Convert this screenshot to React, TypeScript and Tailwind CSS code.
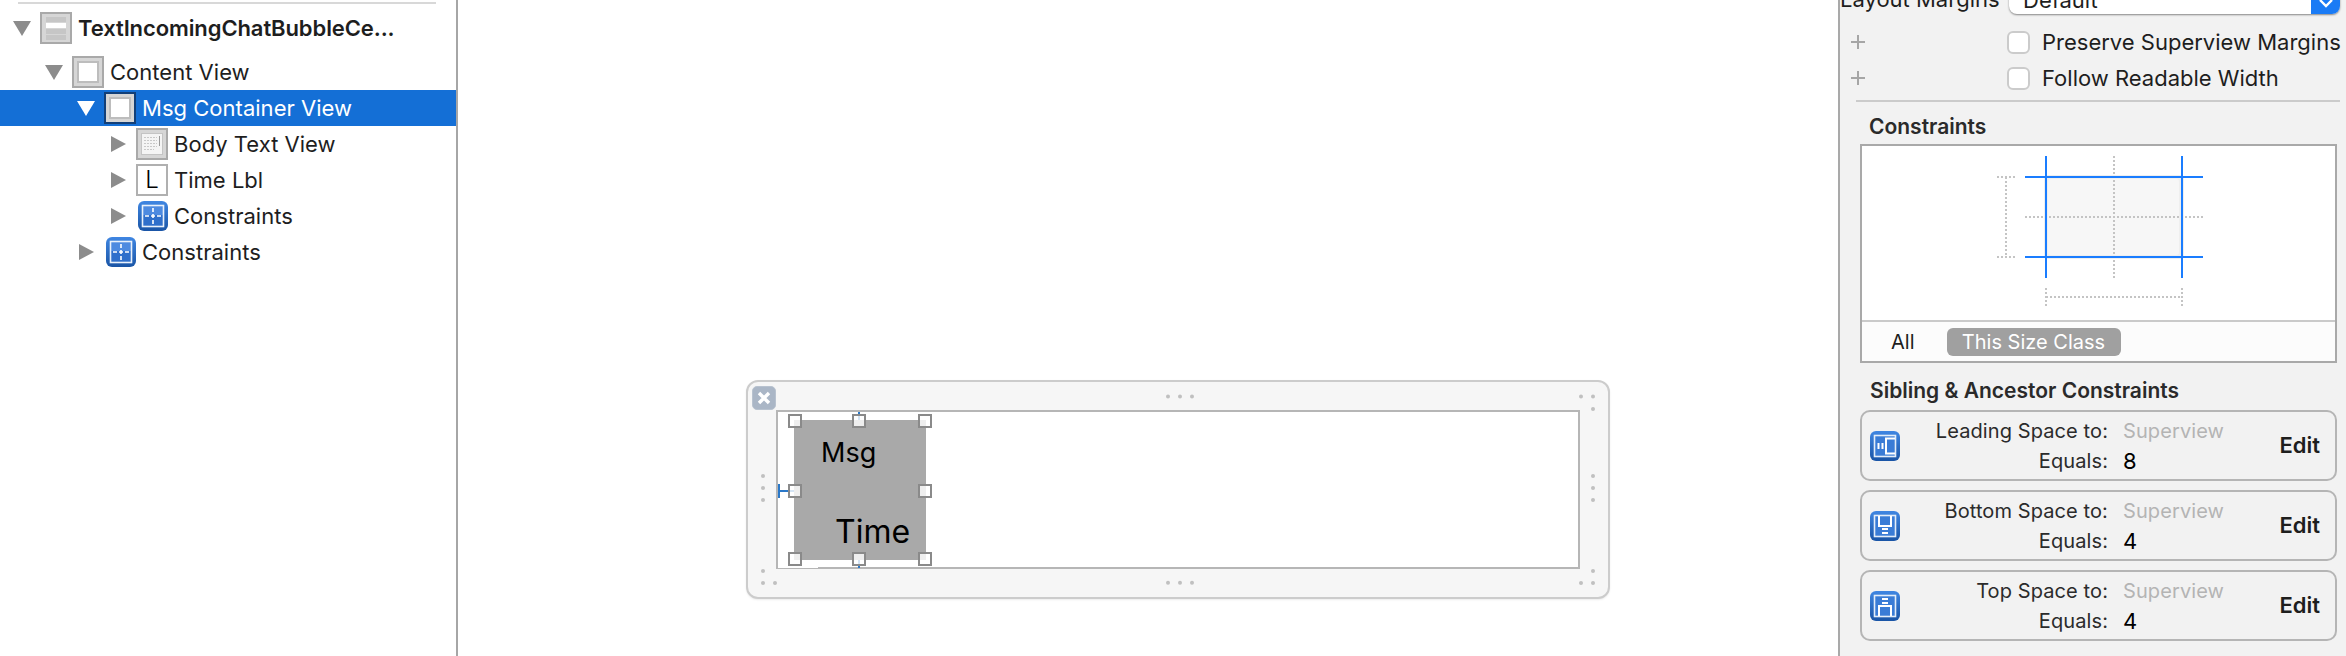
import React from "react";

const font = { fontFamily: '"Inter", "Liberation Sans", sans-serif' };

function Tri({ down, color = "#8c8c8c" }: { down?: boolean; color?: string }) {
  return (
    <svg width="18" height="18" viewBox="0 0 18 18" className="shrink-0">
      {down ? <polygon points="0,2 18,2 9,17" fill={color} /> : <polygon points="1,1 16,9 1,17" fill={color} />}
    </svg>
  );
}

function ViewIcon({ selected }: { selected?: boolean }) {
  return (
    <div className={`w-8 h-8 shrink-0 border-2 ${selected ? "border-[#123f78]" : "border-[#a9a9a9]"} bg-[#d6d6d6] flex items-center justify-center`}>
      <div className="w-[22px] h-[22px] bg-white border-2 border-[#bdbdbd]" />
    </div>
  );
}

function CellIcon() {
  return (
    <div className="w-8 h-8 shrink-0 border-2 border-[#a9a9a9] bg-[#d6d6d6] flex flex-col justify-center gap-[1px] px-[4px]">
      <div className="h-[5px] bg-[#c6c6c6]" />
      <div className="h-[5px] bg-white" />
      <div className="h-[5px] bg-[#c6c6c6]" />
      <div className="h-[5px] bg-[#c6c6c6]" />
    </div>
  );
}

function TextViewIcon() {
  return (
    <div className="w-8 h-8 shrink-0 border-2 border-[#a9a9a9] bg-[#d6d6d6] flex items-center justify-center">
      <svg width="22" height="22" viewBox="0 0 22 22">
        <rect width="22" height="22" fill="#f4f4f4" />
        <rect x="0.5" y="0.5" width="21" height="21" fill="none" stroke="#c4c4c4" />
        <g stroke="#c8c8c8" strokeDasharray="2 1">
          <path d="M3 4.5h13M3 7.5h13M3 10.5h13M3 13.5h13M3 16.5h10" />
        </g>
        <path d="M18.5 3v10" stroke="#9a9a9a" />
      </svg>
    </div>
  );
}

function LabelIcon() {
  return (
    <div className="w-8 h-8 shrink-0 border-2 border-[#b0b0b0] bg-white flex items-center justify-center text-[24px] leading-none font-light text-black">
      L
    </div>
  );
}

function BlueIcon({ kind, id }: { kind: "cross" | "leading" | "bottom" | "top"; id: string }) {
  return (
    <svg width="30" height="30" viewBox="0 0 30 30" className="shrink-0">
      <defs>
        <linearGradient id={id} x1="0" y1="0" x2="0" y2="1">
          <stop offset="0" stopColor="#3f86e2" />
          <stop offset="1" stopColor="#1a55a6" />
        </linearGradient>
      </defs>
      <rect width="30" height="30" rx="6" fill={`url(#${id})`} />
      {kind === "cross" ? (
        <>
          <rect x="5" y="5" width="20" height="20" fill="#2f6fcb" />
          <rect x="5" y="5" width="20" height="9" fill="#4d8ae0" />
          <rect x="4.5" y="4.5" width="21" height="21" fill="none" stroke="#e9f1fb" strokeWidth="1.6" />
          <path d="M15 7v4M15 13v4M15 19v4M7 15h4M13 15h4M19 15h4" stroke="#fff" strokeWidth="1.6" />
        </>
      ) : (
        <>
          <rect x="5" y="5" width="20" height="20" fill="#3a7cd6" />
          <rect x="4.5" y="4.5" width="21" height="21" fill="none" stroke="#e3edf9" strokeWidth="1.6" />
          {kind === "leading" && <path d="M8.5 12v6M12.5 12v6M25 7.5h-9v15h9" fill="none" stroke="#fff" strokeWidth="2" />}
          {kind === "bottom" && <path d="M9 5v10h12V5M12 18h6M12 22h6" fill="none" stroke="#fff" strokeWidth="2" />}
          {kind === "top" && <path d="M9 25V15h12v10M12 8h6M12 12h6" fill="none" stroke="#fff" strokeWidth="2" />}
        </>
      )}
    </svg>
  );
}

const rows = [
  { pl: "pl-[13px]", down: true, icon: <CellIcon />, text: "TextIncomingChatBubbleCe...", bold: true, h: "h-[36px] mb-[8px]" },
  { pl: "pl-[45px]", down: true, icon: <ViewIcon />, text: "Content View" },
  { pl: "pl-[77px]", down: true, icon: <ViewIcon selected />, text: "Msg Container View", selected: true },
  { pl: "pl-[110px]", icon: <TextViewIcon />, text: "Body Text View" },
  { pl: "pl-[110px]", icon: <LabelIcon />, text: "Time Lbl" },
  { pl: "pl-[110px]", icon: <BlueIcon kind="cross" id="c1" />, text: "Constraints", blue: true },
  { pl: "pl-[78px]", icon: <BlueIcon kind="cross" id="c2" />, text: "Constraints", blue: true },
];

function Tree() {
  return (
    <aside className="w-[458px] h-full shrink-0 border-r-2 border-[#a6a6a6] bg-white">
      <div className="h-[2px] mt-[2px] mb-[6px] ml-[18px] mr-[20px] bg-[#d8d8d8]" />
      {rows.map((r, i) => (
        <div
          key={i}
          className={`flex items-center ${r.h ?? "h-[36px]"} ${r.pl} ${r.selected ? "bg-[#146fd6] text-white" : "text-[#1e1e1e]"}`}
        >
          <Tri down={r.down} color={r.selected ? "#ffffff" : "#8c8c8c"} />
          <div className={r.down ? "ml-[9px]" : r.blue ? "ml-[10px]" : "ml-[8px]"}>{r.icon}</div>
          <span className={`ml-[6px] text-[22px] leading-none whitespace-nowrap ${r.bold ? "font-semibold tracking-[-0.1px]" : "tracking-[0.02px]"}`}>{r.text}</span>
        </div>
      ))}
    </aside>
  );
}

const dots = [
  [1168, 396.6], [1180, 396.6], [1192, 396.6], [1168, 582.7], [1180, 582.7], [1192, 582.7],
  [1581, 396.6], [1593, 396.6], [1593, 409], [1593, 476], [1593, 488], [1593, 500], [1593, 571], [1581, 583], [1593, 583],
  [763, 476], [763, 488], [763, 500], [763, 571], [763, 583], [775, 583],
];

function Handle({ className }: { className: string }) {
  return <div className={`absolute w-[14px] h-[14px] border-2 border-[#8a8a8a] bg-white/80 ${className}`} />;
}

function Widget() {
  return (
    <div className="relative ml-[288px] mt-[380px] w-[864px] h-[219px] rounded-[12px] border-2 border-[#cccccc] bg-[#f6f6f6] shadow-[0_1px_2px_rgba(0,0,0,0.08)] pl-[28px] pt-[28px]">
      <svg className="absolute left-[-2px] top-[-2px]" width="864" height="219" viewBox="746 380 864 219">
        {dots.map(([x, y], i) => (
          <circle key={i} cx={x} cy={y} r="2" fill="#c0c0c0" />
        ))}
      </svg>
      <div className="absolute left-[4px] top-[4px] w-[24px] h-[24px] rounded-[5px] bg-[#aab6c6] border border-[#b8c2cf] flex items-center justify-center">
        <svg width="16" height="16" viewBox="0 0 16 16">
          <path d="M3 3l10 10M13 3L3 13" stroke="#fff" strokeWidth="3.4" />
        </svg>
      </div>
      <div className="relative w-[804px] h-[159px] border-2 border-[#b6b6b6] bg-white pl-[16px] pt-[8px]">
        <div className="absolute left-0 bottom-[-1px] w-[40px] h-[1px] bg-white" />
        <div className="relative w-[132px] h-[140px] bg-[#a9a9a9] flex flex-col justify-between text-black">
          <span className="pl-[27px] pt-[17px] text-[27px] leading-[32px] font-normal">Msg</span>
          <span className="pl-[41px] pb-[9px] text-[32px] leading-[38px] font-normal">Time</span>
          <div className="absolute left-[64px] top-[-8px] w-[2px] h-[8px] bg-[#2a78c8]" />
          <div className="absolute left-[64px] bottom-[-8px] w-[2px] h-[8px] bg-[#2a78c8]" />
          <div className="absolute left-[-16px] top-[64px] w-[2px] h-[14px] bg-[#2a78c8]" />
          <div className="absolute left-[-14px] top-[70px] w-[14px] h-[2px] bg-[#2a78c8]" />
          <Handle className="left-[-6px] top-[-6px]" />
          <Handle className="left-[58px] top-[-6px]" />
          <Handle className="left-[124px] top-[-6px]" />
          <Handle className="left-[-6px] top-[64px]" />
          <Handle className="left-[124px] top-[64px]" />
          <Handle className="left-[-6px] top-[132px]" />
          <Handle className="left-[58px] top-[132px]" />
          <Handle className="left-[124px] top-[132px]" />
        </div>
      </div>
    </div>
  );
}

function Check({ label }: { label: string }) {
  return (
    <div className="flex items-center h-[36px]">
      <span className="w-[14px] ml-[11px] flex items-center justify-center">
        <svg width="14" height="14" viewBox="0 0 14 14">
          <path d="M7 0v14M0 7h14" stroke="#a6a6a6" strokeWidth="2" />
        </svg>
      </span>
      <div className="ml-[142px] w-[23px] h-[23px] rounded-[6px] border-2 border-[#cbcbcb] bg-white" />
      <span className="ml-[12px] text-[22px] leading-none whitespace-nowrap text-[#1e1e1e]">{label}</span>
    </div>
  );
}

function Diagram() {
  const dot = { stroke: "#c4c4c4", strokeWidth: 2, strokeDasharray: "2 2", fill: "none" };
  return (
    <svg width="473" height="174" viewBox="1862 146 473 174" className="block">
      <rect x="2044" y="175" width="140" height="84" rx="4" fill="#efefef" />
      <rect x="2048" y="179" width="131" height="76" rx="3" fill="#f7f7f7" />
      <path d="M2114 156V278M2025 217H2203" {...dot} />
      <path d="M2006 177V257M1997 177H2015M1997 257H2015M2046 297H2182M2046 288V306M2182 288V306" {...dot} />
      <path d="M2046 156V278M2182 156V278M2025 177H2203M2025 257H2203" stroke="#1a7dff" strokeWidth="2" />
    </svg>
  );
}

function ConstraintCard({ name, value, kind, id }: { name: string; value: string; kind: "leading" | "bottom" | "top"; id: string }) {
  return (
    <div className="h-[71px] mb-[9px] rounded-[10px] border-2 border-[#b5b5b5] flex items-center pl-[8px] pr-[15px]">
      <BlueIcon kind={kind} id={id} />
      <div className="w-[208px] text-right text-[#2b2b2b] text-[20px] tracking-[0.1px] leading-[30px] whitespace-nowrap">
        <div>{name}</div>
        <div>Equals:</div>
      </div>
      <div className="ml-[15px] text-[20px] tracking-[0.1px] leading-[30px] whitespace-nowrap">
        <div className="text-[#b4b4b4]">Superview</div>
        <div className="text-black text-[22px]">{value}</div>
      </div>
      <span className="ml-auto text-[22px] font-semibold text-[#1e1e1e]">Edit</span>
    </div>
  );
}

function Inspector() {
  return (
    <aside className="w-[508px] h-full shrink-0 ml-auto border-l-2 border-[#a9a9a9] bg-[#f2f2f2] overflow-hidden">
      <div className="flex items-center h-[30px] mt-[-16px] text-[22px] text-[#1e1e1e]">
        <span className="w-[157px] text-right whitespace-nowrap">Layout Margins</span>
        <div className="ml-[12px] w-[331px] h-[30px] rounded-[8px] bg-white shadow-[0_1px_2px_rgba(0,0,0,0.45)] flex overflow-hidden">
          <span className="pl-[14px] flex-1">Default</span>
          <div className="w-[29px] bg-[#1a7bf5] flex items-center justify-center">
            <svg width="16" height="10" viewBox="0 0 16 10" className="mt-[8px]">
              <path d="M2 2l6 6 6-6" stroke="#fff" strokeWidth="2.4" fill="none" />
            </svg>
          </div>
        </div>
      </div>
      <div className="mt-[10px]">
        <Check label="Preserve Superview Margins" />
        <Check label="Follow Readable Width" />
      </div>
      <div className="h-[2px] mt-[4px] ml-[16px] mr-[6px] bg-[#cbcbcb]" />
      <div className="ml-[29px] mt-[12px] h-[26px] text-[21px] leading-[26px] font-semibold text-[#2a2a2a]">Constraints</div>
      <div className="mt-[4px] ml-[20px] w-[477px] h-[219px] border-2 border-[#a9a9a9] bg-white">
        <Diagram />
        <div className="h-[41px] border-t-2 border-[#cacaca] bg-[#fcfcfc] flex items-center pl-[29px] text-[20px]">
          <span className="text-[#1e1e1e]">All</span>
          <span className="ml-[32px] h-[28px] w-[174px] rounded-[6px] bg-[#a0a0a0] text-white flex items-center justify-center">This Size Class</span>
        </div>
      </div>
      <div className="ml-[30px] mt-[15px] h-[26px] text-[21px] leading-[26px] font-semibold text-[#2a2a2a] whitespace-nowrap">Sibling &amp; Ancestor Constraints</div>
      <div className="mt-[6px] ml-[20px] w-[477px]">
        <ConstraintCard name="Leading Space to:" value="8" kind="leading" id="b1" />
        <ConstraintCard name="Bottom Space to:" value="4" kind="bottom" id="b2" />
        <ConstraintCard name="Top Space to:" value="4" kind="top" id="b3" />
      </div>
    </aside>
  );
}

export default function App() {
  return (
    <div className="flex w-[2346px] h-[656px] overflow-hidden bg-white" style={font}>
      <Tree />
      <main className="flex-1 min-w-0">
        <Widget />
      </main>
      <Inspector />
    </div>
  );
}
